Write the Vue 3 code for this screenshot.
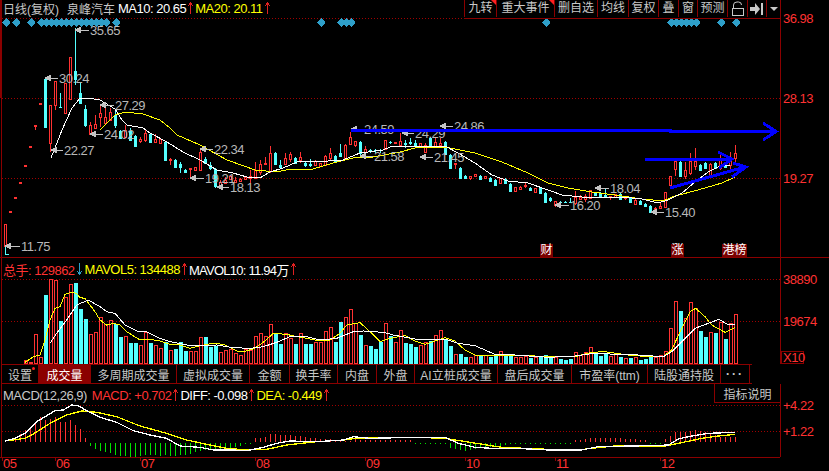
<template>
  <div class="screen">
    <!-- K line panel -->
    <section class="panel main">
      <svg class="chart" viewBox="0 0 829 258" width="829" height="258">
        <rect x="0" y="0" width="2" height="98" fill="#8b0000" />
        <line x1="1.5" x2="1.5" y1="98" y2="258" class="axis" />
        <line v-for="y in [18.5, 98.5, 178.5]" :key="y" x1="2" x2="780" :y1="y" :y2="y" class="grid" />
        <path v-for="x in diamonds" :key="x" :d="`M${x} 18L${x + 4} 22.5L${x} 27L${x - 4} 22.5Z`" fill="#2e9fc9" />
        <path d="M5.5 246V254.5H9" stroke="#54ffff" fill="none" stroke-width="1.5" />
        <template v-for="c in candles" :key="c.i">
          <line :x1="c.x" :x2="c.x" :y1="c.hi" :y2="c.lo" :stroke="c.color" />
          <rect v-if="c.up" :x="c.x - 1" :y="c.top" width="2" :height="c.h" fill="#000" :stroke="c.color" />
          <rect v-else :x="c.x - 1.5" :y="c.top" width="3" :height="c.h" :fill="c.color" />
        </template>
        <path :d="ma20" class="line yellow" />
        <path :d="ma10" class="line white" />
        <g v-for="p in priceTags" :key="p.t">
          <path :d="`M${p.x} ${p.y}H${p.x + p.w}M${p.x} ${p.y}l5 -2.5v5z`" stroke="#c4c4c4" fill="#c4c4c4" />
          <text :x="p.x + p.w + 1" :y="p.y + 5" class="tag">{{ p.t }}</text>
        </g>
        <g fill="none" stroke="#0000ff" stroke-width="3">
          <path d="M351 130H670V131.5H775M763 123L776 131.5L763 140" />
          <path d="M645 159H730M718 152L732 159L719 168" />
          <path d="M670 188L745 167M733 163L746 167L732 177" />
        </g>
        <line x1="780.5" x2="780.5" y1="0" y2="258" class="axis" />
        <line x1="0" x2="829" y1="257.5" y2="257.5" class="axis" />
        <text v-for="a in mainAxis" :key="a.t" x="783" :y="a.y" class="scale">{{ a.t }}</text>
      </svg>
      <div class="legend top-legend">
        <span class="gray cjk">日线(复权)</span>
        <span class="gray cjk name">泉峰汽车</span>
        <span class="white-text">MA10: 20.65</span>
        <svg class="up-arrow" viewBox="0 0 7 12"><path d="M3.5 1V12M1 4L3.5 1L6 4" /></svg>
        <span class="yellow-text">MA20: 20.11</span>
        <svg class="up-arrow" viewBox="0 0 7 12"><path d="M3.5 1V12M1 4L3.5 1L6 4" /></svg>
      </div>
      <div class="tools">
        <button v-for="t in tools" :key="t.label" class="tool" :class="{ flag: t.flag }">{{ t.label }}</button>
        <button class="tool icon">
          <svg width="14" height="16" viewBox="0 0 14 16">
            <path d="M2.5 7V4Q2.5 1 6 1H7.5Q10.5 1 10.5 4" fill="none" stroke="#c8c8c8" />
            <rect x="1.5" y="7.5" width="11" height="7" fill="none" stroke="#c8c8c8" />
          </svg>
        </button>
        <button class="tool icon">
          <svg width="14" height="12" viewBox="0 0 14 12">
            <path d="M0 4H5V0L10 6L5 12V8H0Z" fill="#c8c8c8" />
            <rect x="11" y="0" width="2" height="12" fill="#c8c8c8" />
          </svg>
        </button>
        <button class="tool icon">
          <svg width="10" height="6" viewBox="0 0 10 6"><path d="M1 1H9L5 5Z" fill="#c8c8c8" /></svg>
        </button>
      </div>
      <div class="events">
        <span class="event first">财</span>
        <span class="event second">涨</span>
        <span class="event">港榜</span>
      </div>
    </section>

    <!-- volume panel -->
    <section class="panel vol">
      <svg class="chart" viewBox="0 258 829 106" width="829" height="106">
        <line v-for="y in [279.5, 321.5]" :key="y" x1="2" x2="780" :y1="y" :y2="y" class="grid" />
        <template v-for="b in volumes" :key="b.x">
          <rect v-if="b.up" :x="b.x - 1" :y="b.y" width="3" :height="b.h" fill="#000" stroke="#ff3232" />
          <rect v-else :x="b.x - 1.5" :y="b.y" width="4" :height="b.h + 1" fill="#54ffff" />
        </template>
        <path :d="mavol5" class="line yellow" />
        <path :d="mavol10" class="line white" />
        <line x1="780.5" x2="780.5" y1="258" y2="364" class="axis" />
        <line x1="1.5" x2="1.5" y1="258" y2="364" class="axis" />
        <text x="783" y="284" class="scale">38890</text>
        <text x="783" y="326" class="scale">19674</text>
        <rect x="781.5" y="351.5" width="22" height="12" fill="none" class="axis" />
        <text x="783" y="362" class="scale">X10</text>
      </svg>
      <div class="legend vol-legend">
        <span class="red-text">总手: 129862</span>
        <svg class="up-arrow down" viewBox="0 0 7 12"><path d="M3.5 0V11M1 8L3.5 11L6 8" /></svg>
        <span class="yellow-text">MAVOL5: 134488</span>
        <svg class="up-arrow" viewBox="0 0 7 12"><path d="M3.5 1V12M1 4L3.5 1L6 4" /></svg>
        <span class="white-text">MAVOL10: 11.94万</span>
        <svg class="up-arrow" viewBox="0 0 7 12"><path d="M3.5 1V12M1 4L3.5 1L6 4" /></svg>
      </div>
    </section>

    <!-- indicator tabs -->
    <nav class="tabs">
      <button v-for="t in tabs" :key="t" class="tab" :class="{ active: t === '成交量', dot: t === '设置' }">{{ t }}</button>
    </nav>

    <!-- MACD panel -->
    <section class="panel macd">
      <svg class="chart" viewBox="0 384 829 87" width="829" height="87">
        <line v-for="y in [405.5, 431.5]" :key="y" x1="2" x2="780" :y1="y" :y2="y" class="grid" />
        <line v-for="b in macdBars" :key="b.x" :x1="b.x" :x2="b.x" :y1="b.y1" :y2="b.y2" :stroke="b.color" />
        <path :d="dea" class="line yellow" stroke-width="1.3" />
        <path :d="diff" class="line white" stroke-width="1.3" />
        <line x1="780.5" x2="780.5" y1="384" y2="457" class="axis" />
        <line x1="1.5" x2="1.5" y1="384" y2="457" class="axis" />
        <line x1="0" x2="780" y1="457.5" y2="457.5" class="axis" />
        <text x="783" y="410" class="scale">+4.22</text>
        <text x="783" y="436" class="scale">+1.22</text>
        <g v-for="m in months" :key="m.t">
          <line :x1="m.x" :x2="m.x" y1="457" y2="461" class="axis" />
          <text :x="m.x + 1" y="468" class="scale">{{ m.t }}</text>
        </g>
      </svg>
      <div class="legend macd-legend">
        <span class="gray">MACD(12,26,9)</span>
        <span class="red-text">MACD: +0.702</span>
        <svg class="up-arrow" viewBox="0 0 7 12"><path d="M3.5 1V12M1 4L3.5 1L6 4" /></svg>
        <span class="white-text">DIFF: -0.098</span>
        <svg class="up-arrow" viewBox="0 0 7 12"><path d="M3.5 1V12M1 4L3.5 1L6 4" /></svg>
        <span class="yellow-text">DEA: -0.449</span>
        <svg class="up-arrow" viewBox="0 0 7 12"><path d="M3.5 1V12M1 4L3.5 1L6 4" /></svg>
      </div>
      <button class="explain">指标说明</button>
    </section>
  </div>
</template>

<script setup>
const RED = '#ff3232'
const CYAN = '#54ffff'

// [high, body top, body bottom, low] in chart pixels, one candle every 5px
const kline = [
  [224,224,246,246],[211,211,211,211],[197,197,197,197],[182,182,182,182],[165,165,165,165],[146,146,146,146],
  [125,125,126,130],[103,103,103,103],[78,78,127,127],[105,105,143,152],[81,81,105,110],[93,106,107,108],
  [83,83,113,113],[57,57,99,99],[28,70,79,85],[82,92,103,103],[105,108,125,127],[122,125,134,135],
  [115,124,128,128],[105,113,117,127],[108,117,123,124],[108,112,120,120],[110,114,125,128],[130,130,138,138],
  [125,130,137,137],[128,130,140,140],[135,135,146,146],[137,139,141,143],[130,133,140,142],[133,133,142,142],
  [134,139,142,143],[139,139,143,143],[141,141,160,160],[158,159,160,165],[159,159,167,167],[162,163,167,173],
  [169,169,172,172],[168,168,169,178],[167,167,170,170],[148,152,170,170],[157,158,163,164],[162,164,168,170],
  [168,168,186,188],[180,182,186,188],[177,180,183,183],[175,176,179,180],[177,180,182,183],[178,179,181,182],
  [176,177,179,179],[170,176,178,183],[162,170,178,178],[160,164,172,175],[157,163,164,164],[146,153,171,173],
  [152,152,164,164],[160,164,167,168],[153,158,164,165],[152,154,159,162],[157,157,163,163],[152,157,160,163],
  [162,162,165,167],[159,163,165,167],[160,161,165,166],[163,163,166,167],[155,156,165,165],[148,153,158,160],
  [155,155,161,162],[144,152,156,157],[144,145,158,159],[132,137,144,145],[141,141,145,147],[141,141,153,155],
  [146,149,152,153],[149,149,150,153],[149,149,150,153],[149,149,150,153],[140,140,149,149],[141,141,142,144],
  [142,142,143,143],[133,141,145,145],[140,142,144,148],[138,141,143,145],[140,142,145,148],[143,143,146,146],
  [143,145,152,153],[137,137,145,145],[138,142,146,147],[138,143,145,145],[141,141,154,154],[154,154,168,168],
  [163,163,164,169],[167,167,178,178],[175,175,178,178],[176,176,178,180],[174,174,176,176],[175,175,179,179],
  [176,176,178,178],[177,177,181,181],[179,179,185,185],[178,178,183,183],[178,178,183,183],[183,183,191,191],
  [187,187,191,191],[186,187,189,189],[183,185,186,188],[187,187,190,190],[188,188,192,192],[187,187,193,193],
  [192,192,202,202],[197,197,200,202],[201,201,205,207],[201,201,202,202],[201,201,202,202],[198,201,202,203],
  [191,197,203,205],[195,197,199,200],[194,196,199,202],[190,190,198,198],[192,192,195,195],[192,192,196,196],
  [188,194,196,196],[196,196,197,200],[194,194,197,197],[193,193,199,199],[196,196,198,200],[197,197,202,202],
  [199,200,204,205],[200,200,204,204],[203,203,206,206],[205,205,212,212],[207,208,210,213],[203,206,208,208],
  [192,192,207,207],[176,176,185,185],[159,161,169,176],[161,161,176,176],[162,170,176,179],[153,161,173,175],
  [148,161,166,170],[164,164,170,170],[162,162,168,168],[163,164,175,175],[162,162,168,168],[155,160,168,170],
  [162,162,167,167],[152,160,165,170],[145,153,158,163]
]

// top of each volume bar, negative means a falling day
const volTops = [
  363,363,363,363,360,362,334,357,-294,279,280,-320,297,284,-282,-308,-318,334,332,317,324,320,-323,-336,336,
  -342,-342,345,332,-342,345,348,-341,350,-348,-341,-350,351,351,337,-336,-346,-345,352,350,349,353,355,349,350,
  336,333,336,324,-333,-343,333,338,-343,333,-343,-343,342,342,331,327,-341,-321,317,309,323,-334,345,-345,-348,
  -341,323,-335,342,330,-342,-343,-346,345,342,-340,335,330,-339,-345,354,-353,-356,357,355,-354,355,-356,-355,
  351,-355,-355,357,357,356,-357,357,-355,-354,-357,357,-358,-359,-358,352,355,352,347,-352,-355,-352,356,354,
  -356,358,-357,357,-359,-358,-354,357,355,351,328,301,-310,318,302,308,-330,-336,332,-332,322,-338,323,314
]

const macdValues = [
  0,0,3,8,12,13,20,25,22,23,25,20,20,22,17,13,4,-3,-6,-8,-9,-10,-12,-13,-13,-14,-15,-13,-12,-12,-12,-13,-12,-13,
  -13,-12,-12,-11,-9,-8,-7,-7,-7,-6,-6,-5,-4,-3,-1,-1,4,4,5,8,8,7,7,7,6,6,5,4,4,3,3,3,2,2,1,1,3,2,2,2,2,2,2,2,2,2,2,2,
  -1,-1,-1,-1,-1,-1,-1,-5,-6,-7,-8,-7,-6,-5,-5,-4,-4,-3,-2,-1,-1,-1,-1,-1,-1,-1,-1,-1,-1,-1,-1,-1,
  2,2,3,4,4,4,4,4,4,4,3,3,3,2,2,-1,-1,-1,3,6,10,10,10,11,12,11,10,8,7,5,5,5,5
]

const barX = (i) => 5.5 + i * 5

const candles = kline.map(([hi, top, bot, lo], i) => ({
  i,
  x: barX(i),
  hi,
  lo,
  top: top + 0.5,
  h: Math.max(bot - top, 1),
  up: volTops[i] > 0,
  color: volTops[i] > 0 ? RED : CYAN
}))

const volumes = volTops.map((t, i) => ({
  x: barX(i),
  y: Math.abs(t) + 0.5,
  h: 363 - Math.abs(t),
  up: t > 0
}))

const macdBars = macdValues
  .map((v, i) => ({
    x: barX(i),
    y1: v > 0 ? 441.5 - v : 443,
    y2: v > 0 ? 441.5 : 443 - v,
    color: v > 0 ? RED : '#00e000',
    v
  }))
  .filter((b) => b.v !== 0)

const linePath = (pts) => 'M' + pts.map((p) => p.join(' ')).join('L')

// traced from the picture at 3x, ox/oy is where the crop started
const traced = (pts, ox, oy) => pts.map(([x, y]) => [ox + x / 3, oy + y / 3])

const ma10 = linePath([
  [51,158],[62,130],[72,108],[80,98],[88,98],[100,100],[115,109],[122,120],[127,125],[143,128],[150,133],[167,142],
  [183,152],[200,160],[217,170],[233,173],[247,177],[260,178],[270,172],[283,168],[297,162],[317,161],[328,161],
  [343,160],[360,153],[383,150],[390,147],[415,146],[445,146],[458,153],[475,163],[492,175],[508,181],[528,183],
  [548,190],[562,195],[582,197],[602,197],[622,197],[642,199],[658,203],[668,200],[682,193],[695,182],[708,172],
  [718,167],[730,165]
])

const ma20 = linePath([
  [100,130],[115,115],[125,112],[143,114],[160,120],[170,128],[177,135],[200,145],[227,160],[255,170],[277,172],
  [290,169],[313,169],[333,163],[353,158],[373,157],[400,152],[415,148],[445,147],[475,153],[502,162],[528,173],
  [548,183],[568,188],[592,192],[622,196],[642,199],[663,201],[675,196],[698,190],[722,183],[735,177]
])

const mavol5 = linePath([
  ...traced([
    [75,322],[100,305],[120,300],[135,255],[150,195],[165,160],[180,155],[195,118],[215,112],[230,115],[240,128],
    [255,130],[270,150],[285,170],[300,195],[320,210],[340,205],[360,210],[380,230],[420,255],[450,253],[480,258],
    [510,268],[540,270],[570,280],[600,272],[640,265],[670,268],[710,288],[730,290],[760,282],[790,262],[820,235],
    [860,238],[890,245],[920,250],[960,258],[990,255],[1020,235],[1040,210],[1080,203],[1110,230],[1140,260],
    [1170,250],[1215,242],[1245,258]
  ], 0, 255),
  ...traced([
    [30,268],[60,258],[90,248],[120,258],[150,285],[180,300],[240,300],[300,300],[400,305],[480,305],[530,292],
    [570,290],[640,300],[700,305],[745,305],[770,285],[800,220],[825,170],[842,160],[870,185],[890,210],[930,232],
    [960,217]
  ], 415, 255)
])

const mavol10 = linePath([
  ...traced([
    [150,265],[170,235],[200,195],[230,150],[265,135],[300,155],[320,170],[345,175],[375,210],[410,228],[440,230],
    [480,250],[510,260],[560,270],[600,272],[650,270],[700,278],[750,280],[790,275],[830,262],[870,245],[920,245],
    [960,255],[1010,250],[1060,230],[1090,228],[1150,232],[1180,240],[1245,252]
  ], 0, 255),
  ...traced([
    [30,253],[100,255],[130,265],[180,272],[240,298],[300,300],[400,307],[480,303],[530,296],[640,298],[745,305],
    [770,290],[800,260],[840,220],[880,205],[912,193],[935,207],[960,207]
  ], 415, 255)
])

const diff = linePath([
  ...traced([
    [15,243],[45,235],[75,220],[110,185],[165,152],[190,150],[215,135],[235,137],[265,155],[300,172],[350,187],
    [400,212],[450,225],[500,235],[540,258],[600,262],[640,270],[700,270],[740,272],[790,262],[830,250],[870,243],
    [950,245],[1030,240],[1060,230],[1110,235],[1245,232]
  ], 0, 360),
  ...traced([
    [90,232],[130,250],[180,262],[230,265],[300,265],[400,270],[500,270],[550,260],[700,257],[760,255],[790,237],
    [830,228],[880,220],[960,217]
  ], 415, 360)
])

const dea = linePath([
  ...traced([
    [15,243],[75,235],[100,222],[150,190],[200,165],[245,153],[290,157],[350,170],[420,198],[500,220],[560,240],
    [620,253],[680,265],[740,270],[800,268],[860,255],[950,245],[1030,240],[1070,235],[1150,232],[1245,232]
  ], 0, 360),
  ...traced([
    [90,235],[165,247],[260,262],[400,268],[470,272],[530,265],[600,258],[750,258],[800,248],[860,235],[910,228],
    [960,223]
  ], 415, 360)
])

const diamonds = [
  6.5, 16.5, 31.5, 41.5, 46.5, 51.5, 56.5, 61.5, 66.5, 71.5, 76.5, 81.5, 86.5, 91.5, 96.5, 101.5, 106.5, 116.5,
  321.5, 341.5, 346.5, 351.5, 546.5, 671.5, 676.5, 681.5, 686.5, 691.5, 696.5, 721.5, 736.5
]

const priceTags = [
  { t: '35.65', x: 75, y: 30, w: 14 },
  { t: '30.24', x: 45, y: 78, w: 13 },
  { t: '27.29', x: 100, y: 105, w: 14 },
  { t: '24.02', x: 90, y: 134, w: 13 },
  { t: '22.27', x: 51, y: 150, w: 12 },
  { t: '22.34', x: 200, y: 149, w: 13 },
  { t: '19.21', x: 190, y: 178, w: 14 },
  { t: '18.13', x: 217, y: 187, w: 12 },
  { t: '11.75', x: 5, y: 246, w: 15 },
  { t: '24.59', x: 351, y: 129, w: 12 },
  { t: '21.58', x: 360, y: 156, w: 13 },
  { t: '24.29', x: 402, y: 133, w: 12 },
  { t: '21.45', x: 420, y: 157, w: 13 },
  { t: '24.86', x: 440, y: 126, w: 13 },
  { t: '18.04', x: 595, y: 188, w: 14 },
  { t: '16.20', x: 555, y: 205, w: 14 },
  { t: '15.40', x: 651, y: 212, w: 13 }
]

const mainAxis = [
  { t: '36.98', y: 23 },
  { t: '28.13', y: 103 },
  { t: '19.27', y: 183 }
]

const months = [
  { t: '05', x: 2 }, { t: '06', x: 55 }, { t: '07', x: 140 }, { t: '08', x: 255 },
  { t: '09', x: 365 }, { t: '10', x: 465 }, { t: '11', x: 555 }, { t: '12', x: 660 }
]

const tools = [
  { label: '九转', flag: true },
  { label: '重大事件', flag: true },
  { label: '删自选' },
  { label: '均线' },
  { label: '复权' },
  { label: '叠' },
  { label: '窗' },
  { label: '预测' }
]

const tabs = [
  '设置', '成交量', '多周期成交量', '虚拟成交量', '金额', '换手率', '内盘', '外盘',
  'AI立桩成交量', '盘后成交量', '市盈率(ttm)', '陆股通持股', '···'
]
</script>

<style scoped>
.screen {
  width: 829px;
  height: 471px;
  background: #000;
  display: flex;
  flex-direction: column;
  overflow: hidden;
  font-family: "Liberation Sans", "Noto Sans CJK SC", sans-serif;
  font-size: 12px;
}

.panel {
  display: grid;
  grid-template-columns: 829px;
}

.panel > * {
  grid-area: 1 / 1;
}

.main { height: 258px; }
.vol { height: 106px; }
.macd { height: 87px; }

.chart {
  display: block;
  shape-rendering: crispEdges;
}

.grid {
  stroke: #a00000;
  stroke-dasharray: 1 2;
}

.axis {
  stroke: #8b0000;
}

.line {
  fill: none;
}

.line.white { stroke: #fff; }
.line.yellow { stroke: #ffff00; }

.tag {
  font-size: 13px;
  letter-spacing: -0.5px;
  fill: #b8b8b8;
}

.scale {
  font-size: 13px;
  letter-spacing: -0.5px;
  fill: #ff3232;
}

.legend {
  display: flex;
  align-items: center;
  align-self: start;
  height: 16px;
  padding-left: 3px;
  font-size: 13px;
  letter-spacing: -0.5px;
  white-space: nowrap;
}

.cjk {
  font-size: 12px;
  letter-spacing: 0;
}

.top-legend .name { margin: 0 3px 0 8px; }

.vol-legend { margin-top: 3px; }

.vol-legend .yellow-text { margin-left: 1px; }

.vol-legend .white-text { letter-spacing: -0.75px; }

.macd-legend { margin-top: 3px; }

.macd-legend .red-text { margin-left: 5px; }

.up-arrow {
  width: 7px;
  height: 12px;
  margin: 0 1px 0 1px;
  fill: none;
  stroke: #e02020;
  shape-rendering: crispEdges;
}

.up-arrow.down { stroke: #2e9fc9; }

.gray { color: #c8c8c8; }
.white-text { color: #fff; }
.yellow-text { color: #ffff00; }
.red-text { color: #ff3232; }

.tools {
  display: grid;
  grid-template-columns: 32px 58px 43px 31px 30px 20px 19px 30px 20px 19px 14px;
  align-self: start;
  justify-self: end;
  height: 18px;
  margin-right: 49px;
  border-bottom: 1px solid #8b0000;
}

.tool {
  position: relative;
  padding: 0;
  height: 17px;
  background: #000;
  border: 0;
  border-left: 1px solid #8b0000;
  color: #c8c8c8;
  font: inherit;
  line-height: 17px;
  white-space: nowrap;
}

.tool.flag::after {
  content: "";
  position: absolute;
  top: 0;
  right: 0;
  border-top: 5px solid #ff2020;
  border-left: 5px solid transparent;
}

.tool.icon {
  display: flex;
  align-items: center;
  justify-content: center;
}

.events {
  display: flex;
  align-self: start;
  margin: 244px 0 0 540px;
  height: 13px;
}

.event {
  height: 13px;
  padding: 0 0.5px;
  background: #7a0000;
  color: #fff;
  font-size: 12px;
  line-height: 13px;
}

.first { margin-right: 118px; }
.second { margin-right: 38px; }

.tabs {
  display: grid;
  grid-template-columns: 37px 52px 86px 73px 40px 48px 39px 38px 83px 74px 76px 73px 30px;
  width: 751px;
  height: 20px;
  margin-left: 1px;
  border-top: 1px solid #8b0000;
  border-bottom: 1px solid #8b0000;
  box-sizing: border-box;
}

.tab {
  position: relative;
  padding: 0;
  background: #000;
  border: 0;
  border-left: 1px solid #8b0000;
  border-right: 0;
  color: #c8c8c8;
  font: inherit;
  white-space: nowrap;
}

.tab:last-child {
  border-right: 1px solid #8b0000;
  font-weight: bold;
  letter-spacing: 2px;
}

.tab.active {
  background: #8b0000;
  color: #fff;
}

.tab.dot::after {
  content: "";
  position: absolute;
  top: 2px;
  right: 3px;
  width: 3px;
  height: 3px;
  border-radius: 50%;
  background: #ff2020;
}

.explain {
  align-self: start;
  justify-self: end;
  width: 66px;
  height: 19px;
  margin-right: 49px;
  padding: 0;
  background: #000;
  border: 0;
  border-left: 1px solid #8b0000;
  border-bottom: 1px solid #8b0000;
  color: #c8c8c8;
  font: inherit;
}
</style>
